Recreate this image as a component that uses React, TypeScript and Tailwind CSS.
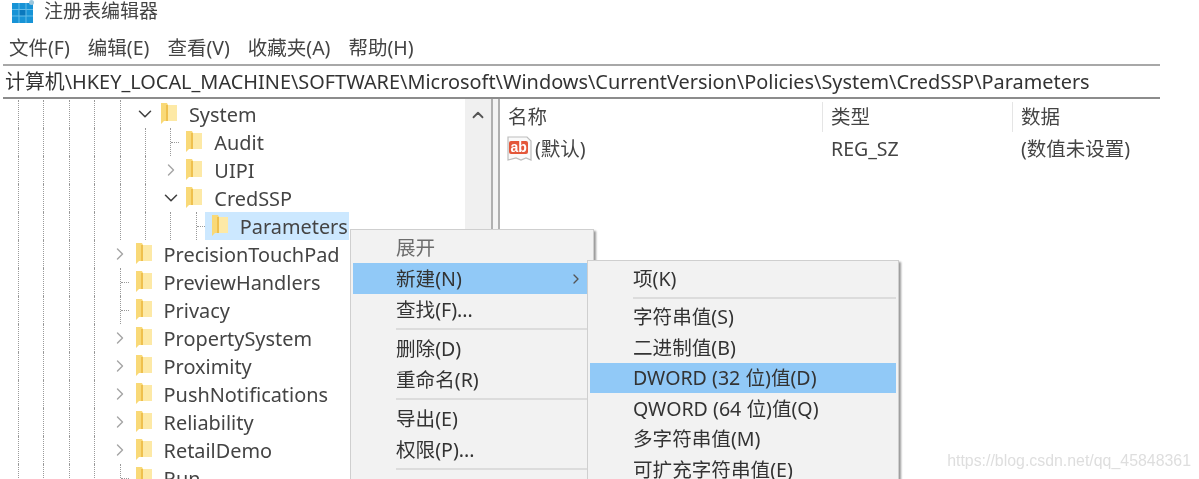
import { ChevronDown, ChevronRight, ChevronUp } from "lucide-react"

const FONT = "font-['Noto_Sans','Noto_Sans_CJK_SC',sans-serif]"

type Kind = "open" | "closed" | "leaf"

const rows: { label: string; level: number; kind: Kind; selected?: boolean }[] = [
    { label: "System", level: 5, kind: "open" },
    { label: "Audit", level: 6, kind: "leaf" },
    { label: "UIPI", level: 6, kind: "closed" },
    { label: "CredSSP", level: 6, kind: "open" },
    { label: "Parameters", level: 7, kind: "leaf", selected: true },
    { label: "PrecisionTouchPad", level: 4, kind: "closed" },
    { label: "PreviewHandlers", level: 4, kind: "leaf" },
    { label: "Privacy", level: 4, kind: "leaf" },
    { label: "PropertySystem", level: 4, kind: "closed" },
    { label: "Proximity", level: 4, kind: "closed" },
    { label: "PushNotifications", level: 4, kind: "closed" },
    { label: "Reliability", level: 4, kind: "closed" },
    { label: "RetailDemo", level: 4, kind: "closed" },
    { label: "Run", level: 4, kind: "leaf" },
]

const Folder = () => (
    <svg width="16" height="22" viewBox="0 0 16 22" className="shrink-0">
        <path d="M0 0h6l1 2v16H3l-3 3z" fill="#f9d977" />
        <path d="M5 2h2v16H5z" fill="#efc04e" />
        <path d="M7 2h9v16H7z" fill="#fde9a6" />
    </svg>
)

const AppIcon = () => (
    <svg width="23" height="23" viewBox="0 0 23 23" className="shrink-0">
        <rect x="0" y="3" width="21" height="20" fill="#1793d6" />
        <rect x="7" y="9" width="7" height="7" fill="#0a78bd" />
        <path d="M7 3v20M14 3v20M0 9.5h21M0 16h21" stroke="#63bce8" strokeWidth="1" />
        <circle cx="19.5" cy="2.5" r="2.5" fill="#9cc6dc" />
    </svg>
)

const RegIcon = () => (
    <svg width="26" height="26" viewBox="0 0 26 26" className="shrink-0">
        <path d="M1 1h19l4 4v19l-5-2-5 2-5-2-8 2z" fill="#fafafa" stroke="#bdbdbd" strokeWidth="1.2" />
        <rect x="2" y="5" width="19" height="13" rx="2" fill="#e4573a" />
        <text x="3.5" y="16" fontSize="14" fontWeight="700" fill="#fff" fontFamily="Liberation Sans">ab</text>
    </svg>
)

const TreeRow = ({ label, level, kind, selected }: (typeof rows)[number]) => (
    <div className="flex h-[28px] shrink-0 items-center pl-[18px]">
        {Array.from({ length: level }, (_, i) => (
            <span key={i} className="h-full w-[25.4px] shrink-0 border-l border-dotted border-[#9a9a9a]" />
        ))}
        <span className="-ml-[8px] flex h-full w-[17px] shrink-0 items-center justify-center">
            {kind === "closed" && <ChevronRight size={20} strokeWidth={1.7} className="shrink-0 text-[#a6a6a6]" />}
            {kind === "open" && <ChevronDown size={22} strokeWidth={1.7} className="shrink-0 text-[#404040]" />}
            {kind === "leaf" && (
                <span className="ml-[8px] flex h-full w-[9px] items-center border-l border-dotted border-[#9a9a9a]">
                    <span className="h-0 w-full border-t border-dotted border-[#9a9a9a]" />
                </span>
            )}
        </span>
        <span className={`flex h-full items-center gap-[12px] pl-[7px] pr-[1px] ${selected ? "bg-[#cce8ff]" : ""}`}>
            <Folder />
            <span className="relative top-[1px] text-[19.9px] text-[#444]">{label}</span>
        </span>
    </div>
)

const Item = ({ label, hot, muted, arrow, sub }: { label: string; hot?: boolean; muted?: boolean; arrow?: boolean; sub?: boolean }) => (
    <div className={`flex items-center justify-between pl-[43px] pr-[9px] text-[19.6px] whitespace-nowrap ${sub ? "h-[30.5px]" : "h-[31px]"} ${hot ? "bg-[#91c9f7]" : ""} ${muted ? "text-[#6d6d6d]" : "text-[#333]"}`}>
        <span>{label}</span>
        {arrow && <ChevronRight size={16} strokeWidth={2} className="text-[#555]" />}
    </div>
)

const Sep = () => <div className="my-[3px] ml-[43px] h-[2px] bg-[#dcdcdc]" />

export default function App() {
    return (
        <div className={`relative flex h-[479px] w-[1199px] flex-col overflow-hidden bg-white ${FONT} blur-[0.7px]`}>
            <div className="flex h-[22px] items-center gap-[9px] pl-[12px] text-[19px] leading-none text-[#444]">
                <AppIcon />
                <span>注册表编辑器</span>
            </div>
            <div className="mt-[10px] flex h-[32px] items-center gap-[18px] pl-[9px] text-[19.5px] text-[#444]">
                <span>文件(F)</span>
                <span>编辑(E)</span>
                <span>查看(V)</span>
                <span>收藏夹(A)</span>
                <span>帮助(H)</span>
            </div>
            <div className="ml-[3px] mr-[39px] flex h-[35px] items-center whitespace-nowrap border-y-2 border-b-[#8c8c8c] border-t-[#a8a8a8] pl-[2px] text-[19.9px] text-[#333]">
                计算机\HKEY_LOCAL_MACHINE\SOFTWARE\Microsoft\Windows\CurrentVersion\Policies\System\CredSSP\Parameters
            </div>
            <div className="flex min-h-0 flex-1">
                <div className="flex w-[465px] flex-col overflow-hidden pt-[1px]">
                    {rows.map((r) => (
                        <TreeRow key={r.label} {...r} />
                    ))}
                </div>
                <div className="flex w-[26px] justify-center bg-[#f0f0f0] pt-[7px]">
                    <ChevronUp size={18} strokeWidth={2.4} className="text-[#555]" />
                </div>
                <div className="w-[9px] border-x-2 border-x-[#b0b0b0] bg-[#f4f4f4]" />
                <div className="flex-1 pr-[39px] text-[#444]">
                    <div className="flex h-[36px] items-center text-[19.5px]">
                        <span className="w-[322px] pl-[8px]">名称</span>
                        <span className="w-[190px] border-l border-[#e5e5e5] pl-[8px]">类型</span>
                        <span className="border-l border-[#e5e5e5] pl-[8px]">数据</span>
                    </div>
                    <div className="flex h-[28px] items-center text-[19.5px]">
                        <span className="flex w-[322px] items-center pl-[7px]">
                            <RegIcon />
                            <span className="ml-[2px]">(默认)</span>
                        </span>
                        <span className="w-[190px] pl-[9px]">REG_SZ</span>
                        <span className="pl-[9px]">(数值未设置)</span>
                    </div>
                </div>
            </div>

            <div className="absolute left-[350px] top-[229px] h-[260px] w-[244px] border border-[#cfcfcf] bg-[#f2f2f2] py-[2px] pl-[2px] shadow-[2px_2px_2px_#999]">
                <Item label="展开" muted />
                <Item label="新建(N)" hot arrow />
                <Item label="查找(F)..." />
                <Sep />
                <Item label="删除(D)" />
                <Item label="重命名(R)" />
                <Sep />
                <Item label="导出(E)" />
                <Item label="权限(P)..." />
                <Sep />
                <Item label="复制项名称(C)" />
            </div>

            <div className="absolute left-[587px] top-[260px] h-[230px] w-[312px] border border-[#cfcfcf] bg-[#f2f2f2] px-[2px] py-[2px] shadow-[2px_2px_2px_#999]">
                <Item sub label="项(K)" />
                <Sep />
                <Item sub label="字符串值(S)" />
                <Item sub label="二进制值(B)" />
                <Item sub label="DWORD (32 位)值(D)" hot />
                <Item sub label="QWORD (64 位)值(Q)" />
                <Item sub label="多字符串值(M)" />
                <Item sub label="可扩充字符串值(E)" />
            </div>

            <div className="absolute bottom-[6px] right-[8px] font-['Liberation_Sans',sans-serif] text-[15.9px] text-[#dedede]">https://blog.csdn.net/qq_45848361</div>
        </div>
    )
}
